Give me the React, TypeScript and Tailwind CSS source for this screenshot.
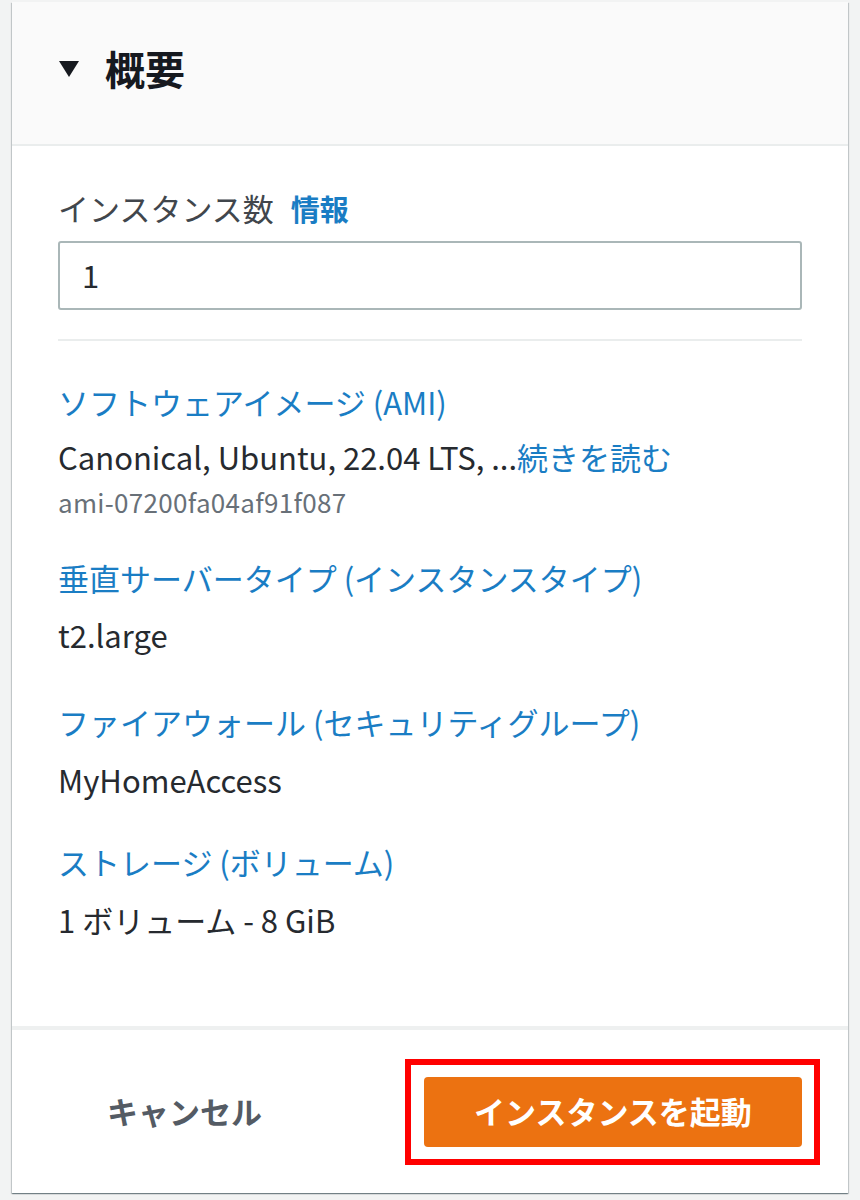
export default function App() {
    const heading = 'text-[31px] leading-[40px] text-[#1a7dc4]';
    const value = 'text-[31px] leading-[40px] text-[#262a2f]';

    return (
        <div className="min-h-[1200px] bg-[#f2f3f3] pl-[12px] pt-[2px] font-['Noto_Sans_CJK_JP',sans-serif]">
            <div className="w-[836px] bg-white shadow-[0_1px_1px_0_rgba(0,28,36,0.35),1px_1px_1px_0_rgba(0,28,36,0.15),-1px_1px_1px_0_rgba(0,28,36,0.15)]">
                <div className="h-[144px] bg-[#fafafa] border-b-2 border-[#eaeded] flex items-center pl-[46px] pb-[10px]">
                    <svg width="22" height="18" viewBox="0 0 22 18" className="shrink-0 mt-[2px]">
                        <path d="M1 1h20L11 17z" fill="#16191f" />
                    </svg>
                    <h2 className="ml-[25px] text-[40px] leading-none font-bold text-[#16191f]">概要</h2>
                </div>

                <div className="px-[46px] pt-[42px] pb-[86px] flex flex-col">
                    <div className="text-[31px] leading-[40px] text-[#41464c]">
                        インスタンス数<span className="ml-[17px] text-[#1a7dc4] font-bold text-[29px]">情報</span>
                    </div>
                    <div className="mt-[13px] h-[69px] border-2 border-[#aab7b8] rounded-[3px] flex items-center pl-[22px] text-[31px] text-[#262a2f]">
                        1
                    </div>
                    <div className="mt-[29px] h-[2px] bg-[#eaeded]" />

                    <div className={`mt-[41px] ${heading}`}>ソフトウェアイメージ (AMI)</div>
                    <div className="mt-[17px] text-[31px] leading-[36px] text-[#262a2f]">
                        Canonical, Ubuntu, 22.04 LTS, ...<span className="text-[#1a7dc4]">続きを読む</span>
                    </div>
                    <div className="mt-[13px] text-[26px] leading-[28px] text-[#687078] tracking-[0.3px]">ami-07200fa04af91f087</div>

                    <div className={`mt-[42px] ${heading}`}>垂直サーバータイプ (インスタンスタイプ)</div>
                    <div className={`mt-[17px] ${value}`}>t2.large</div>

                    <div className={`mt-[47px] ${heading}`}>ファイアウォール (セキュリティグループ)</div>
                    <div className={`mt-[18px] ${value}`}>MyHomeAccess</div>

                    <div className={`mt-[42px] ${heading}`}>ストレージ (ボリューム)</div>
                    <div className={`mt-[18px] ${value}`}>1 ボリューム - 8 GiB</div>
                </div>

                <div className="h-[167px] border-t-4 border-[#eef0f0] flex items-center justify-end pr-[28px]">
                    <button className="mr-[143px] text-[31px] font-bold text-[#545b64]">キャンセル</button>
                    <div className="border-[6px] border-[#ff0000] p-[12px] pl-[13px]">
                        <button className="w-[378px] h-[70px] rounded-[4px] bg-[#ec7211] text-white text-[31px] font-bold flex items-center justify-center">
                            インスタンスを起動
                        </button>
                    </div>
                </div>
            </div>
        </div>
    );
}
